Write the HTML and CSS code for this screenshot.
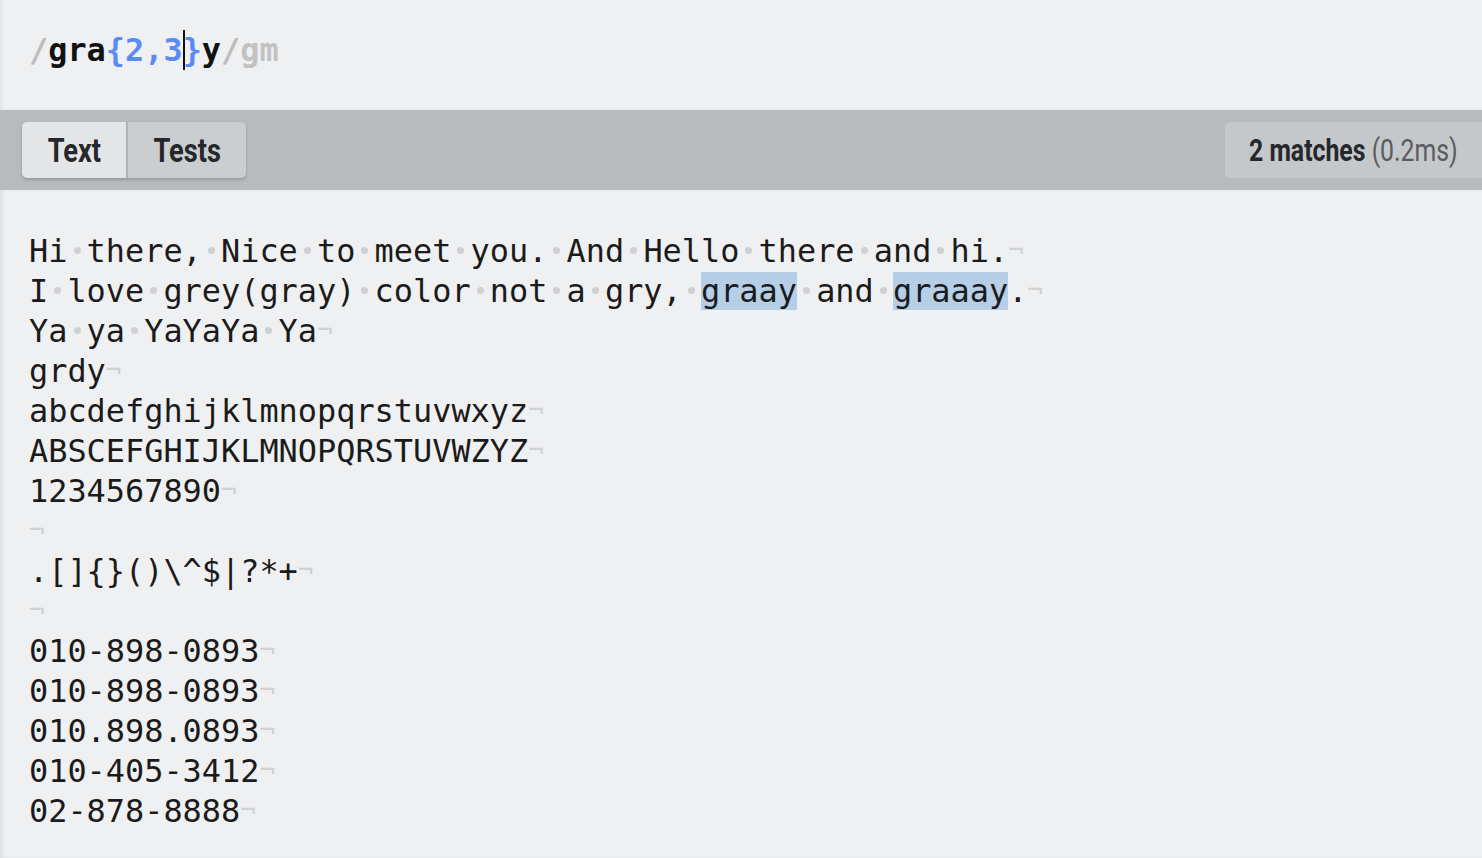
FILE: index.html
```html
<!DOCTYPE html>
<html lang="en">
<head>
<meta charset="utf-8">
<title>Regex tester</title>
<link rel="stylesheet" href="styles.css">
</head>
<body>
<div class="app">
  <header class="expr-bar">
    <div class="expr"><span class="delim">/</span><span class="lit">gra</span><span class="quant">{2,3</span><span class="cursor"></span><span class="quant">}</span><span class="lit">y</span><span class="delim">/</span><span class="flags">gm</span></div>
  </header>
  <nav class="toolbar">
    <div class="tabs">
      <div class="tab tab-active"><span class="cond">Text</span></div>
      <div class="tab tab-idle"><span class="cond">Tests</span></div>
    </div>
    <div class="result"><span class="cond cond-left"><b>2 matches</b> <span class="time">(0.2ms)</span></span></div>
  </nav>
  <main class="editor">
    <div class="line">Hi<span class="s"></span>there,<span class="s"></span>Nice<span class="s"></span>to<span class="s"></span>meet<span class="s"></span>you.<span class="s"></span>And<span class="s"></span>Hello<span class="s"></span>there<span class="s"></span>and<span class="s"></span>hi.<span class="nl">¬</span></div>
    <div class="line">I<span class="s"></span>love<span class="s"></span>grey(gray)<span class="s"></span>color<span class="s"></span>not<span class="s"></span>a<span class="s"></span>gry,<span class="s"></span><span class="m">graay</span><span class="s"></span>and<span class="s"></span><span class="m">graaay</span>.<span class="nl">¬</span></div>
    <div class="line">Ya<span class="s"></span>ya<span class="s"></span>YaYaYa<span class="s"></span>Ya<span class="nl">¬</span></div>
    <div class="line">grdy<span class="nl">¬</span></div>
    <div class="line">abcdefghijklmnopqrstuvwxyz<span class="nl">¬</span></div>
    <div class="line">ABSCEFGHIJKLMNOPQRSTUVWZYZ<span class="nl">¬</span></div>
    <div class="line">1234567890<span class="nl">¬</span></div>
    <div class="line"><span class="nl">¬</span></div>
    <div class="line">.[]{}()\^$|?*+<span class="nl">¬</span></div>
    <div class="line"><span class="nl">¬</span></div>
    <div class="line">010-898-0893<span class="nl">¬</span></div>
    <div class="line">010-898-0893<span class="nl">¬</span></div>
    <div class="line">010.898.0893<span class="nl">¬</span></div>
    <div class="line">010-405-3412<span class="nl">¬</span></div>
    <div class="line">02-878-8888<span class="nl">¬</span></div>
  </main>
</div>
</body>
</html>
```
FILE: styles.css
```css
html, body {
  margin: 0;
  padding: 0;
  background: #eff0f2;
}
body {
  min-height: 100vh;
  font-family: "DejaVu Sans Mono", "Liberation Mono", monospace;
  color: #1b1b1b;
}
.app {
  display: flex;
  flex-direction: column;
  min-height: 100vh;
}
.expr-bar {
  height: 110px;
  box-sizing: border-box;
  padding: 30px 0 0 29px;
  box-shadow: inset 3px 0 4px -2px rgba(0,0,0,0.08);
}
.expr {
  font-size: 31.9px;
  line-height: 40px;
  font-weight: bold;
  white-space: pre;
  display: flex;
  align-items: center;
}
.delim { color: #bcbcbc; }
.flags { color: #c2c2c2; }
.lit { color: #121212; }
.quant { color: #5b8bf3; }
.cursor {
  display: inline-block;
  width: 0;
  height: 40px;
  border-left: 2px solid #111;
  margin-right: -2px;
}
.toolbar {
  height: 80px;
  background: #b8bbbe;
  display: flex;
  align-items: center;
  justify-content: space-between;
  padding-left: 22px;
}
.tabs {
  display: flex;
  gap: 2px;
  height: 56px;
  border-radius: 5px;
  box-shadow: 0 2px 3px rgba(0,0,0,0.18);
  background: #b0b3b6;
}
.tab {
  display: flex;
  align-items: center;
  justify-content: center;
  font-family: Roboto, "Liberation Sans", sans-serif;
  font-weight: 700;
  font-size: 34px;
  color: #25272a;
}
.tab-active {
  width: 104px;
  background: #e4e5e7;
  border-radius: 5px 0 0 5px;
}
.tab-idle {
  width: 118px;
  background: #cbced1;
  border-radius: 0 5px 5px 0;
}
.cond {
  display: inline-block;
  transform: scaleX(0.8);
  white-space: nowrap;
}
.cond-left {
  transform-origin: left center;
  transform: scaleX(0.775);
}
.result {
  width: 257px;
  height: 56px;
  box-sizing: border-box;
  padding-left: 24px;
  background: #c5c8cb;
  border-radius: 5px 0 0 5px;
  display: flex;
  align-items: center;
  font-family: Roboto, "Liberation Sans", sans-serif;
  font-size: 32px;
  color: #25272a;
}
.result b { font-weight: 700; }
.time { color: #5a5c5f; font-weight: 400; }
.editor {
  flex: 1;
  padding: 40px 0 20px 29px;
  font-size: 31.9px;
  line-height: 40px;
  box-shadow: inset 4px 0 6px -3px rgba(0,0,0,0.1);
}
.line {
  height: 40px;
  white-space: pre;
}
.s {
  display: inline-block;
  width: 1ch;
  height: 10px;
  position: relative;
  vertical-align: baseline;
}
.s::after {
  content: "";
  position: absolute;
  left: 50%;
  top: -5px;
  width: 7px;
  height: 7px;
  margin-left: -3.5px;
  border-radius: 50%;
  background: #d0d1d3;
}
.nl {
  color: #cfd0d2;
  font-size: 26px;
  vertical-align: 3px;
}
.m {
  background: #b6cee6;
}
```
